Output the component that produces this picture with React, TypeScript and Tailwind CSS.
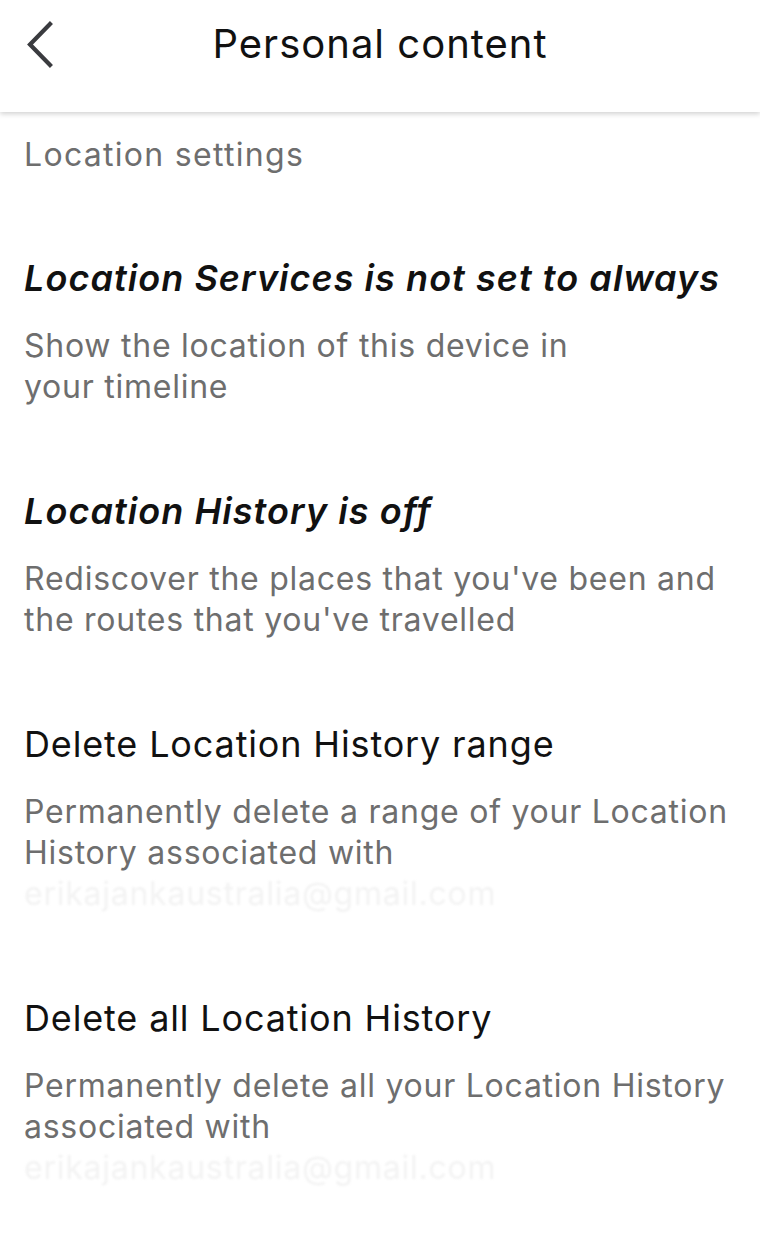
import React from "react";

const font = { fontFamily: "Inter, 'Noto Sans', sans-serif" };

function Item({
  title,
  italic,
  lines,
  email,
}: {
  title: string;
  italic?: boolean;
  lines: string[];
  email?: string;
}) {
  return (
    <div className="flex flex-col">
      <div
        className={
          italic
            ? "text-[36px] leading-[44px] italic font-semibold text-[#111111] tracking-[1.05px]"
            : "text-[36px] leading-[44px] font-normal text-[#111111] tracking-[0.85px]"
        }
      >
        {title}
      </div>
      <div className="mt-[25px] flex flex-col text-[32px] leading-[41px] text-[#6e6e6e] tracking-[0.75px]">
        {lines.map((l, i) => (
          <div key={i}>{l}</div>
        ))}
        {email && <div className="text-[#f3f3f3] blur-[1px]">{email}</div>}
      </div>
    </div>
  );
}

export default function App() {
  return (
    <div className="w-[760px] h-[1238px] bg-white overflow-hidden" style={font}>
      <header className="relative h-[112px] bg-white flex items-center justify-center shadow-[0_2px_5px_rgba(0,0,0,0.18)] z-10">
        <button className="absolute left-[22px] top-[20px] w-[34px] h-[50px] flex items-center justify-center">
          <svg width="30" height="50" viewBox="0 0 30 50" fill="none">
            <path
              d="M26 4 L6 24.5 L26 45"
              stroke="#3a3b3f"
              strokeWidth="4.2"
              strokeLinecap="square"
              strokeLinejoin="miter"
            />
          </svg>
        </button>
        <h1 className="text-[40px] leading-[48px] font-normal text-[#111111] -mt-[24px] tracking-[1px]">
          Personal content
        </h1>
      </header>
      <main className="px-6">
        <div className="pt-[23px] text-[32px] leading-[40px] text-[#6e6e6e] tracking-[1.3px]">
          Location settings
        </div>
        <div className="mt-[81px] flex flex-col gap-[82px]">
          <Item
            italic
            title="Location Services is not set to always"
            lines={["Show the location of this device in", "your timeline"]}
          />
          <Item
            italic
            title="Location History is off"
            lines={["Rediscover the places that you've been and", "the routes that you've travelled"]}
          />
          <Item
            title="Delete Location History range"
            lines={["Permanently delete a range of your Location", "History associated with"]}
            email="erikajankaustralia@gmail.com"
          />
          <Item
            title="Delete all Location History"
            lines={["Permanently delete all your Location History", "associated with"]}
            email="erikajankaustralia@gmail.com"
          />
        </div>
      </main>
    </div>
  );
}
